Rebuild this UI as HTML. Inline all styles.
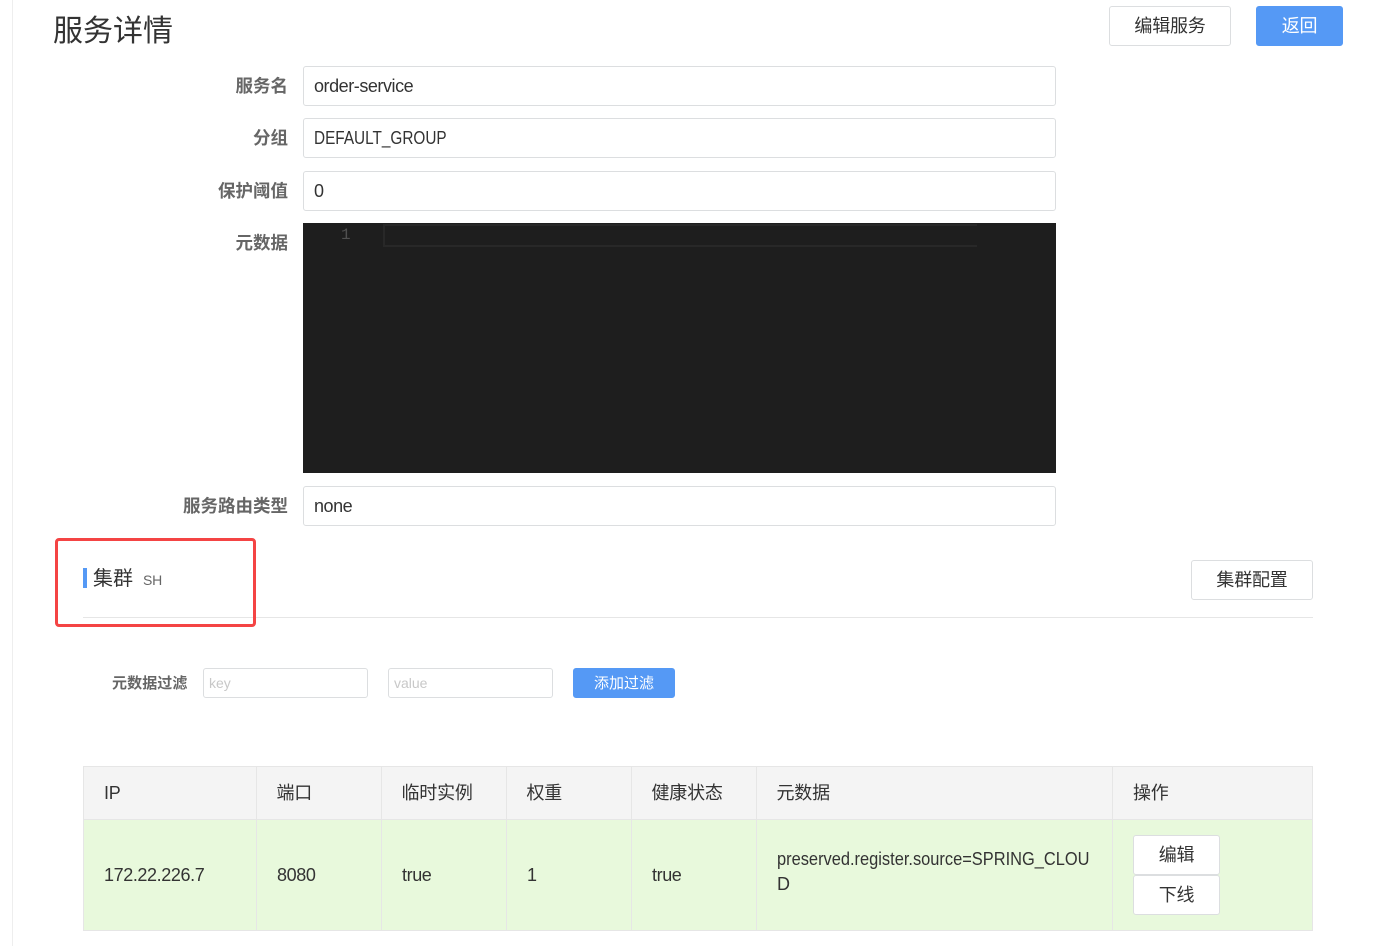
<!DOCTYPE html>
<html lang="zh"><head><meta charset="utf-8"><title>服务详情</title>
<style>
html,body{margin:0;padding:0;background:#fff;}
body{width:1376px;height:946px;position:relative;overflow:hidden;font-family:"Liberation Sans","Noto Sans CJK SC",sans-serif;color:#333;font-size:18px;}
.a{position:absolute;white-space:nowrap;}
.box{position:absolute;box-sizing:border-box;background:#fff;border:1px solid #dcdee0;border-radius:3px;}
.inp{left:303px;width:753px;height:40px;padding-left:10px;line-height:38px;letter-spacing:-.45px;}
.sq{display:inline-block;transform-origin:0 50%;letter-spacing:0;}
.lab{right:1088px;font-weight:700;font-size:17.5px;color:#666;line-height:26px;}
.btn{text-align:center;line-height:38px;letter-spacing:-.2px;}
.pri{background:#5599f5;border-color:#5599f5;color:#fff;}
.v{position:absolute;top:767px;width:1px;height:163px;background:#e6e6e6;}
.t{line-height:26px;letter-spacing:-.4px;}
.h{line-height:26px;letter-spacing:-.2px;margin-left:-.5px;}
</style></head><body>
<div class="a" style="left:12px;top:0;width:1px;height:946px;background:#eee"></div>
<div class="a" style="left:53px;top:10px;font-size:30px;line-height:44px">服务详情</div>
<div class="box btn" style="left:1109px;top:6px;width:122px;height:40px">编辑服务</div>
<div class="box btn pri" style="left:1256px;top:6px;width:87px;height:40px">返回</div>

<div class="a lab" style="top:73px">服务名</div>
<div class="box inp" style="top:66px">order-service</div>
<div class="a lab" style="top:125px">分组</div>
<div class="box inp" style="top:118px"><span class="sq" style="transform:scaleX(.852)">DEFAULT_GROUP</span></div>
<div class="a lab" style="top:178px">保护阈值</div>
<div class="box inp" style="top:171px">0</div>
<div class="a lab" style="top:230px">元数据</div>
<div class="a" style="left:303px;top:223px;width:753px;height:250px;background:#1e1e1e"></div>
<div class="a" style="left:383px;top:224px;width:594px;height:23px;box-sizing:border-box;border:2px solid #282828;border-right:0"></div>
<div class="a" style="left:341px;top:225px;font:16px/20px 'Liberation Mono',monospace;color:#505050">1</div>
<div class="a lab" style="top:493px">服务路由类型</div>
<div class="box inp" style="top:486px">none</div>

<div class="a" style="left:83px;top:617px;width:1230px;height:1px;background:#e6e6e6"></div>
<div class="a" style="left:83px;top:568px;width:4px;height:20px;background:#5599f5"></div>
<div class="a" style="left:93px;top:565px;font-size:20px;line-height:28px">集群</div>
<div class="a" style="left:143px;top:570px;font-size:14px;line-height:20px;color:#666;letter-spacing:-.2px">SH</div>
<div class="box btn" style="left:1191px;top:560px;width:122px;height:40px">集群配置</div>
<div class="a" style="left:55px;top:538px;width:201px;height:89px;box-sizing:border-box;border:3px solid #f44444;border-radius:4px"></div>

<div class="a" style="left:112px;top:673px;font-size:15px;line-height:22px;font-weight:700;color:#666;letter-spacing:.1px">元数据过滤</div>
<div class="box" style="left:203px;top:668px;width:165px;height:30px;padding-left:5px;font-size:14px;line-height:28px;color:#c8c8c8">key</div>
<div class="box" style="left:388px;top:668px;width:165px;height:30px;padding-left:5px;font-size:14px;line-height:28px;color:#c8c8c8">value</div>
<div class="box pri" style="left:573px;top:668px;width:102px;height:30px;text-align:center;font-size:15px;line-height:29px">添加过滤</div>

<div class="a" style="left:83px;top:766px;width:1230px;height:165px;box-sizing:border-box;border:1px solid #e6e6e6;background:#e8f9dc"></div>
<div class="a" style="left:84px;top:767px;width:1228px;height:53px;background:#f4f4f4;border-bottom:1px solid #e6e6e6;box-sizing:border-box"></div>
<div class="v" style="left:256px"></div><div class="v" style="left:381px"></div><div class="v" style="left:506px"></div><div class="v" style="left:631px"></div><div class="v" style="left:756px"></div><div class="v" style="left:1112px"></div>

<div class="a h" style="left:104.5px;top:780px">IP</div>
<div class="a h" style="left:277px;top:780px">端口</div>
<div class="a h" style="left:402px;top:780px">临时实例</div>
<div class="a h" style="left:527px;top:780px">权重</div>
<div class="a h" style="left:652px;top:780px">健康状态</div>
<div class="a h" style="left:777px;top:780px">元数据</div>
<div class="a h" style="left:1133.5px;top:780px">操作</div>

<div class="a t" style="left:104px;top:862px">172.22.226.7</div>
<div class="a t" style="left:277px;top:862px">8080</div>
<div class="a t" style="left:402px;top:862px">true</div>
<div class="a t" style="left:527px;top:862px">1</div>
<div class="a t" style="left:652px;top:862px">true</div>
<div class="a t" style="left:777px;top:846px;letter-spacing:0;transform-origin:0 50%;transform:scaleX(.912)">preserved.register.source=SPRING_CLOU</div>
<div class="a t" style="left:777px;top:871px">D</div>
<div class="box btn" style="left:1133px;top:835px;width:87px;height:40px">编辑</div>
<div class="box btn" style="left:1133px;top:875px;width:87px;height:40px">下线</div>
</body></html>
